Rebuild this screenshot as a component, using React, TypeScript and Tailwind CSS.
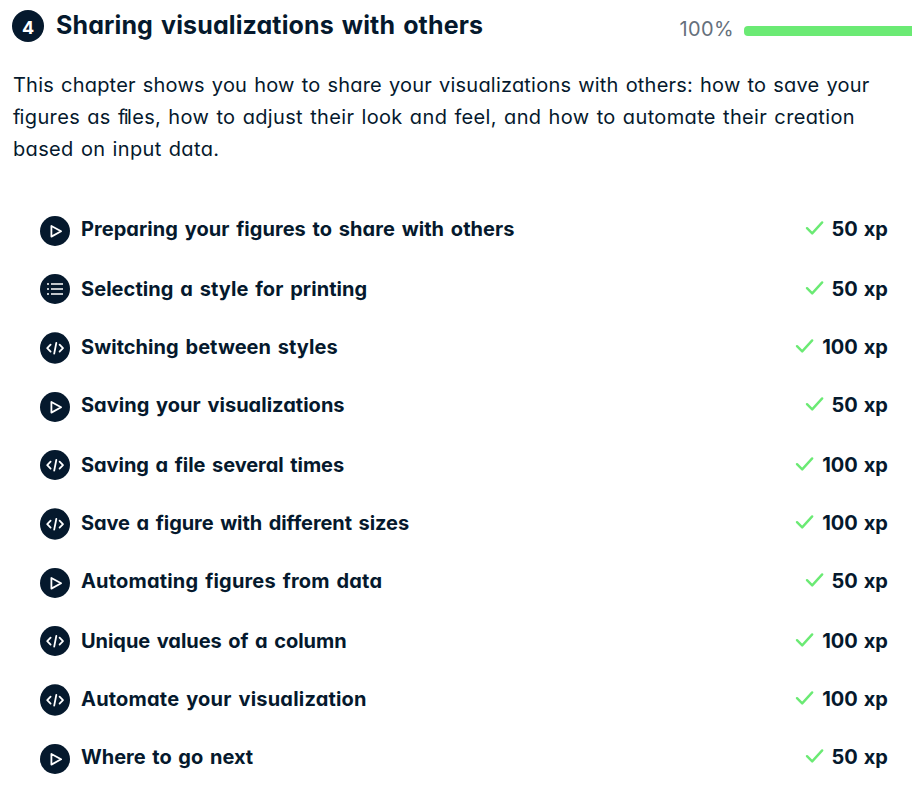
type Kind = 'video' | 'list' | 'code';

interface Exercise {
  kind: Kind;
  title: string;
  xp: number;
  row: string;
  shift: string;
  tracking: string;
}

const exercises: Exercise[] = [
  { kind: 'video', title: 'Preparing your figures to share with others', xp: 50, row: 'h-[60px]', shift: 'mt-4', tracking: 'tracking-[0.04px]' },
  { kind: 'list', title: 'Selecting a style for printing', xp: 50, row: 'h-[58px]', shift: 'mt-3.5', tracking: 'tracking-[0.06px]' },
  { kind: 'code', title: 'Switching between styles', xp: 100, row: 'h-[58px]', shift: 'mt-3.5', tracking: 'tracking-[0.04px]' },
  { kind: 'video', title: 'Saving your visualizations', xp: 50, row: 'h-[60px]', shift: 'mt-4', tracking: 'tracking-[0.02px]' },
  { kind: 'code', title: 'Saving a file several times', xp: 100, row: 'h-[58px]', shift: 'mt-3.5', tracking: 'tracking-[-0.06px]' },
  { kind: 'code', title: 'Save a figure with different sizes', xp: 100, row: 'h-[58px]', shift: 'mt-3.5', tracking: 'tracking-[-0.08px]' },
  { kind: 'video', title: 'Automating figures from data', xp: 50, row: 'h-[60px]', shift: 'mt-4', tracking: 'tracking-[0.18px]' },
  { kind: 'code', title: 'Unique values of a column', xp: 100, row: 'h-[58px]', shift: 'mt-3.5', tracking: 'tracking-[-0.06px]' },
  { kind: 'code', title: 'Automate your visualization', xp: 100, row: 'h-[58px]', shift: 'mt-3.5', tracking: 'tracking-[0.2px]' },
  { kind: 'video', title: 'Where to go next', xp: 50, row: 'h-[46px]', shift: 'mt-4', tracking: 'tracking-[-0.02px]' },
];

function ExerciseIcon({ kind, tall }: { kind: Kind; tall: boolean }) {
  return (
    <svg
      className={tall ? 'h-8 w-[30px] shrink-0' : 'size-[30px] shrink-0'}
      viewBox={tall ? '0 -1 30 32' : '0 0 30 30'}
      fill="none"
      stroke="white"
      strokeWidth="1.8"
      strokeLinecap="round"
      strokeLinejoin="round"
    >
      <ellipse cx="15" cy="15" rx="15" ry={tall ? 15.7 : 15} fill="#05192d" stroke="none" />
      {kind === 'video' && <path d="M11.4 10v10.6l9.7-5.3z" strokeWidth="1.8" />}
      {kind === 'list' && (
        <path d="M7 10h2M11 10h12M7 15h2M11 15h12M7 20h2M11 20h12" strokeWidth="1.6" strokeLinecap="butt" />
      )}
      {kind === 'code' && <path d="M10.6 11.6 7.2 15.2l3.4 3.4M16.3 10l-2.1 10.6M19.6 11.6l3.4 3.6-3.4 3.4" strokeWidth="1.8" />}
    </svg>
  );
}

export default function App() {
  return (
    <main className="h-[790px] w-[912px] overflow-hidden bg-white font-['Inter','Noto_Sans',sans-serif] text-[#05192d] [font-feature-settings:'cv11']">
      <header className="flex h-[60px] items-start pl-3">
        <div className="mt-2.5 flex size-8 items-center justify-center rounded-full bg-[#05192d] pt-0.5 text-[18px] font-bold text-white">
          4
        </div>
        <h2 className="mt-[9px] ml-[12px] text-[25px] leading-8 font-bold tracking-[0.12px] whitespace-nowrap [word-spacing:2px]">
          Sharing visualizations with others
        </h2>
        <div className="ml-auto flex items-start">
          <span className="mt-[13px] mr-2.5 text-[20px] leading-8 tracking-[0.4px] text-[#65707c]">100%</span>
          <div className="mt-[26px] h-2.5 w-[168px] rounded-l-[4px] bg-[#6bea74]" />
        </div>
      </header>

      <p className="mt-[9px] pl-[13px] text-[20px] leading-8 whitespace-nowrap [word-spacing:1.2px]">
        <span className="block tracking-[0.21px]">This chapter shows you how to share your visualizations with others: how to save your</span>
        <span className="block tracking-[0.35px]">
          <span className="tracking-[-0.8px]">f</span>igures as <span className="tracking-[-1.6px]">fi</span>les, how to adjust their look and feel, and how to automate their creation
        </span>
        <span className="block tracking-[0.35px]">based on input data.</span>
      </p>

      <ul className="mt-[35px] pr-6 pl-10">
        {exercises.map((e, i) => (
          <li key={e.title} className={`flex items-start ${e.row}`}>
            <div className={e.shift}>
              <ExerciseIcon kind={e.kind} tall={i === 2 || i === 5 || i === 8} />
            </div>
            <h5 className={`mt-[13px] ml-[11px] text-[20px] leading-8 font-bold whitespace-nowrap [word-spacing:2px] ${e.tracking}`}>
              {e.title}
            </h5>
            <div className="mt-[13px] ml-auto flex items-start">
              <svg className="mt-1.5 mr-2 h-[18px] w-[19px]" viewBox="0 0 19 18" fill="none" stroke="#6bea74" strokeWidth="2.4" strokeLinecap="round" strokeLinejoin="round">
                <path d="M2 9.2l5.2 5.2L17.2 3.4" />
              </svg>
              <span className="text-[20px] leading-8 font-bold tracking-[0.05px] [word-spacing:1px]">{e.xp} xp</span>
            </div>
          </li>
        ))}
      </ul>
    </main>
  );
}
